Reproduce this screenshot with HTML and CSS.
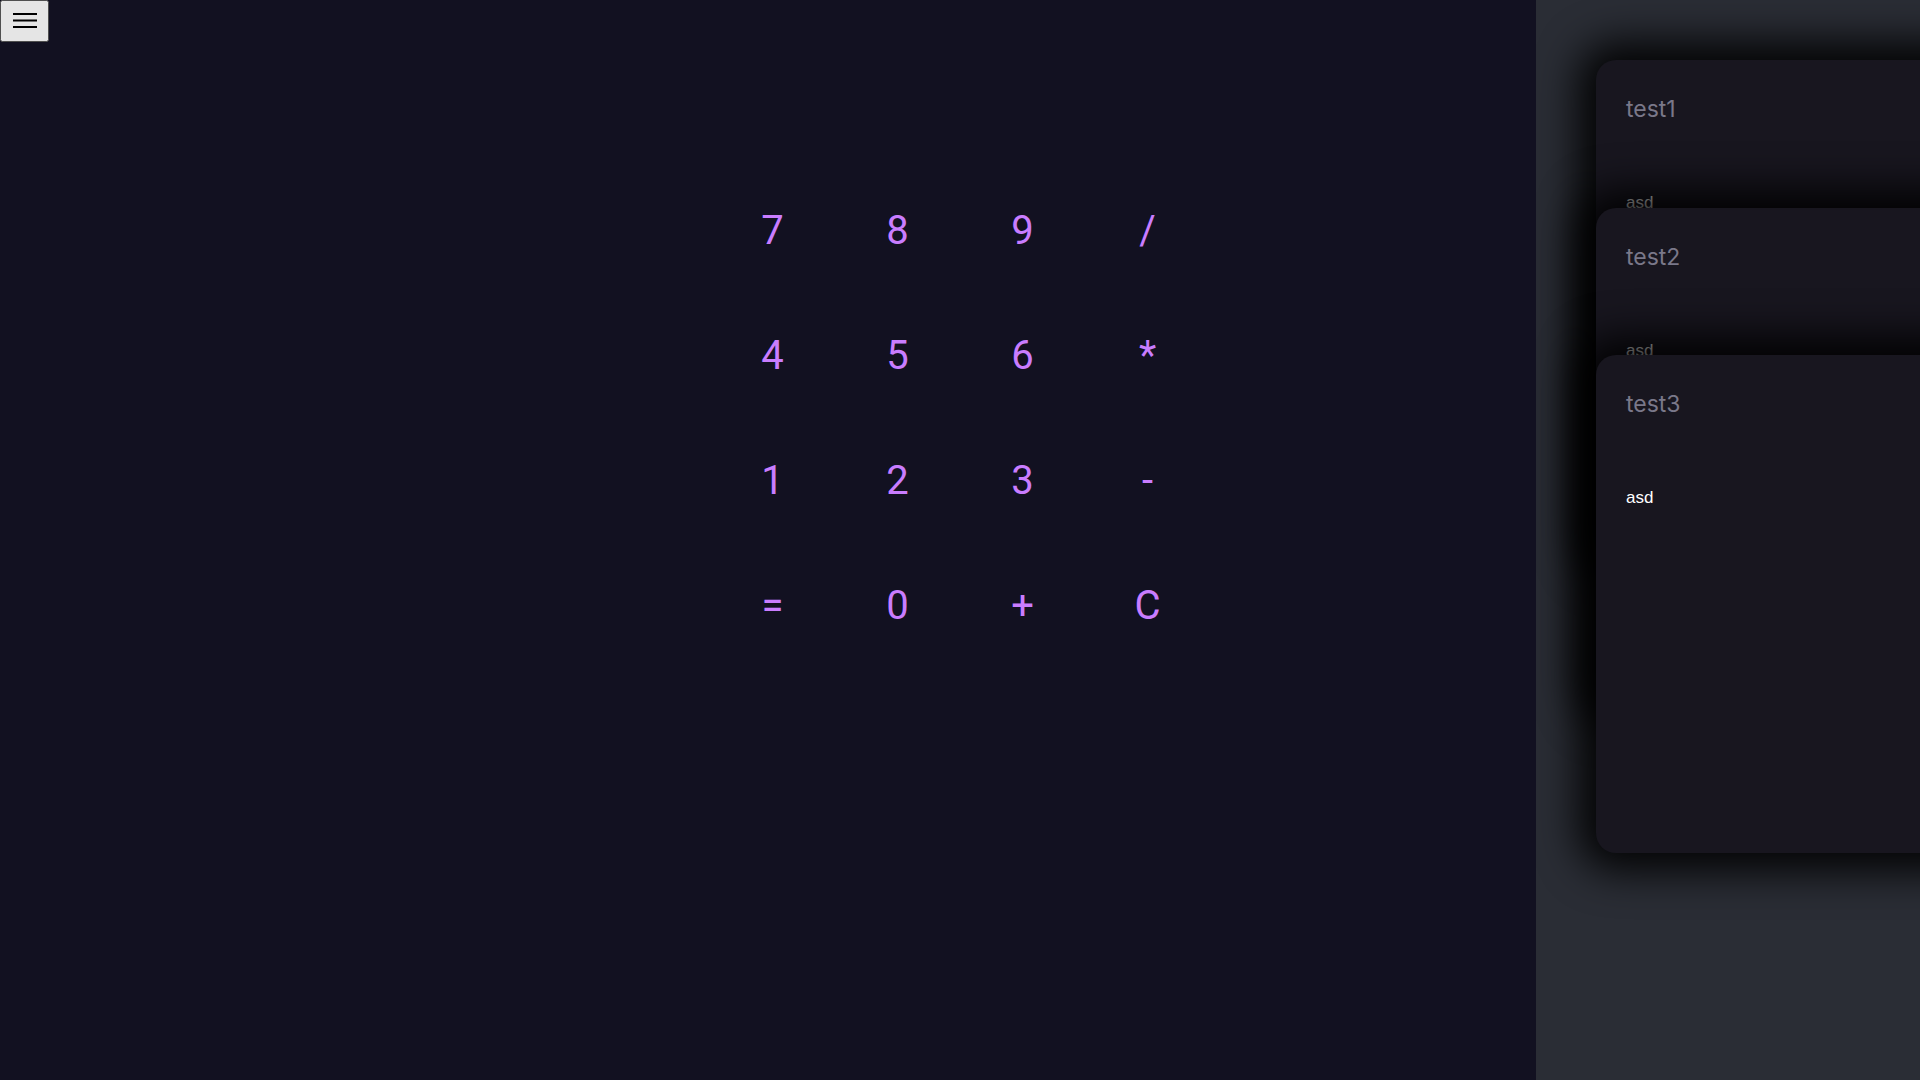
FILE: index.html
```html
<!DOCTYPE html>
<html lang="en">
<head>
  <meta charset="UTF-8">
  <meta name="viewport" content="width=device-width, initial-scale=1.0">
  <title>Calculator</title>
  <link rel="stylesheet" href="styles.css">
</head>
<body>
  <button class="menu-toggle" id="menu-toggle" aria-label="Menu">
    <svg width="24" height="24" viewBox="0 0 24 24">
      <rect x="0" y="4" width="24" height="2" fill="#000"/>
      <rect x="0" y="10.5" width="24" height="2" fill="#000"/>
      <rect x="0" y="17" width="24" height="2" fill="#000"/>
    </svg>
  </button>

  <main class="calculator">
    <div class="keypad" id="keypad">
      <button class="key">7</button>
      <button class="key">8</button>
      <button class="key">9</button>
      <button class="key">/</button>
      <button class="key">4</button>
      <button class="key">5</button>
      <button class="key">6</button>
      <button class="key">*</button>
      <button class="key">1</button>
      <button class="key">2</button>
      <button class="key">3</button>
      <button class="key">-</button>
      <button class="key">=</button>
      <button class="key">0</button>
      <button class="key">+</button>
      <button class="key">C</button>
    </div>
  </main>

  <aside class="history">
    <div class="history-card">
      <h3>test1</h3>
      <p>asd</p>
    </div>
    <div class="history-card">
      <h3>test2</h3>
      <p>asd</p>
    </div>
    <div class="history-card">
      <h3>test3</h3>
      <p>asd</p>
    </div>
  </aside>
</body>
</html>
```

FILE: styles.css
```css
body {
  margin: 0;
  padding: 0;
  background-color: #121121;
  font-family: Roboto, Arial, sans-serif;
  height: 100vh;
  overflow: hidden;
}
.menu-toggle {
  display: flex;
  align-items: center;
  justify-content: center;
  width: 49px;
  height: 42px;
  padding: 0;
}
.calculator {
  display: flex;
  justify-content: center;
  padding-top: 126px;
}
.keypad {
  display: grid;
  grid-template-columns: repeat(4, 125px);
  grid-auto-rows: 125px;
}
.key {
  background: none;
  border: none;
  color: #c97dff;
  font-family: Roboto, sans-serif;
  font-size: 40px;
  cursor: pointer;
}
.history {
  position: fixed;
  top: 0;
  right: 0;
  width: 384px;
  height: 100vh;
  box-sizing: border-box;
  padding: 60px 0 0 60px;
  background-color: #2a2d35;
  overflow: hidden;
}
.history-card {
  position: relative;
  width: 420px;
  height: 498px;
  margin-bottom: -350.5px;
  box-sizing: border-box;
  padding: 35px 30px;
  background-color: #18161f;
  border-radius: 20px;
  box-shadow: 0 0 40px 18px rgba(0, 0, 0, 0.92);
}
.history-card h3 {
  margin: 0;
  font-family: Inter, sans-serif;
  font-size: 23px;
  font-weight: 400;
  color: #7a7889;
}
.history-card p {
  margin: 70px 0 0;
  font-family: "Liberation Sans", Arial, sans-serif;
  font-size: 17px;
  color: #fff;
}
```
